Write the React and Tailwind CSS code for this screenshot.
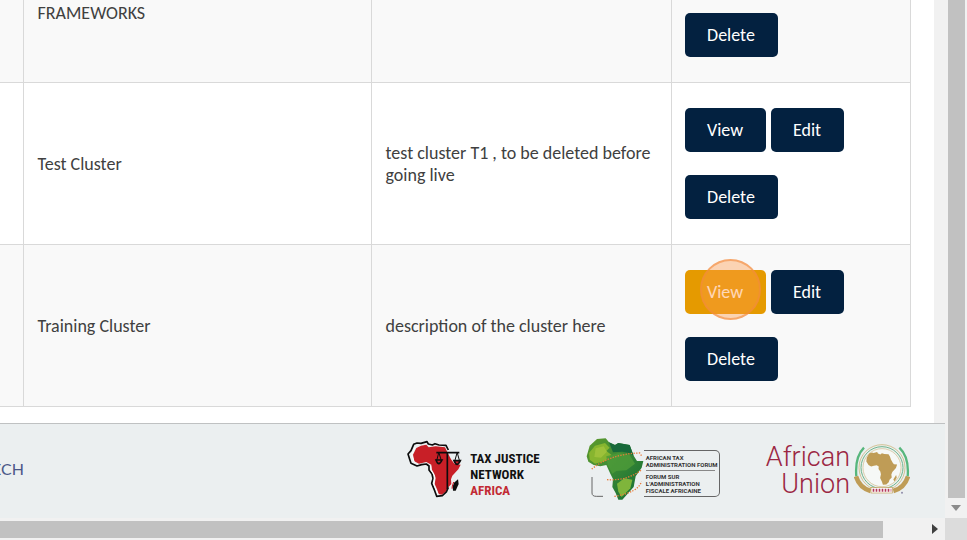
import React from "react";

const AFRICA =
  "M62 94 L74 73 L88 68 L96 70 L114 65 L118 72 L130 77 L138 71 L150 75 L171 76 L178 88 L183 103 L192 119 L198 126 L214 128 L208 145 L190 165 L185 178 L187 192 L176 204 L172 216 L160 228 L143 229 L138 214 L129 195 L133 176 L130 162 L121 150 L122 138 L112 131 L98 134 L84 138 L71 130 L60 112 Z";

function ActionButton({ children, className, marked }) {
  return (
    <button
      type="button"
      className={`relative h-11 rounded-[5px] text-center font-medium text-white ${className}`}
    >
      {children}
      {marked && (
        <span className="pointer-events-none absolute -top-[11px] left-[15px] size-[61px] rounded-full border-2 border-[#f28b3c]/60 bg-[#ff9a4a]/40" />
      )}
    </button>
  );
}

function Actions({ highlightView }) {
  return (
    <div className="flex flex-wrap gap-x-[5px] gap-y-[23px]">
      <ActionButton
        className={highlightView ? "w-[81px] bg-[#e59a00]" : "w-[81px] bg-[#032140]"}
        marked={highlightView}
      >
        View
      </ActionButton>
      <ActionButton className="w-[73px] bg-[#032140]">Edit</ActionButton>
      <ActionButton className="w-[93px] bg-[#032140]">Delete</ActionButton>
    </div>
  );
}

function TaxJusticeLogo() {
  return (
    <a href="#tjna" className="flex items-center gap-2">
      <svg viewBox="54 60 165 174" className="h-[58px] w-[55px]" aria-hidden="true">
        <path
          d="M72 104 L82 84 L96 77 L112 74 L119 82 L140 79 L168 82 L176 98 L186 118 L196 131 L215 134 L208 148 L190 167 L186 178 L187 192 L176 204 L170 216 L158 224 L149 222 L144 208 L137 192 L140 174 L135 160 L128 148 L127 134 L112 126 L90 131 L76 124 Z"
          fill="#c81f27"
        />
        <path
          d="M178 90 L171 76 L150 75 L138 71 L130 75 L118 72 L114 65 L96 70 L84 69 L74 73 L66 92 L57 102 L62 118 L66 130 L84 138 L98 134 L112 132 L120 138 L120 150 L129 162 L132 176 L128 190 L137 212 L143 229 L160 227 L172 216 L178 202"
          fill="none"
          stroke="#0c0c0c"
          strokeWidth="5"
          strokeLinejoin="round"
        />
        <path d="M76 128 L68 104 L78 82 M125 138 L127 152 L137 168 L134 192 L147 222" fill="none" stroke="#fff" strokeWidth="3" />
        <path d="M142 98 H211 M175 97 V207" fill="none" stroke="#0c0c0c" strokeWidth="5" />
        <path d="M149 99 L143 122 M150 99 L157 122 M204 99 L197 124 M205 99 L212 124" fill="none" stroke="#0c0c0c" strokeWidth="3" />
        <path d="M141 120 Q149 142 159 120 Z M195 122 Q204 144 214 122 Z" fill="#c81f27" stroke="#0c0c0c" strokeWidth="5" />
        <path d="M207 178 L209 192 L200 212 L192 212 L191 200 L195 188 Z" fill="#0c0c0c" />
        <path d="M194 186 L190 198 L189 206" fill="none" stroke="#c81f27" strokeWidth="3" />
      </svg>
      <span className="block pt-3 font-['Roboto_Condensed','Liberation_Sans_Narrow','Liberation_Sans',sans-serif] text-[13px] leading-4 font-bold whitespace-nowrap text-[#111]">
        TAX JUSTICE
        <br />
        NETWORK
        <br />
        <span className="text-[#c22a34]">AFRICA</span>
      </span>
    </a>
  );
}

function TaxForumLogo() {
  return (
    <a href="#ataf" className="flex items-center">
      <svg viewBox="51 50 174 192" className="h-16 w-[58px]" aria-hidden="true">
        <defs>
          <linearGradient id="forumLeaf" x1="0" y1="0" x2="1" y2="1">
            <stop offset="0" stopColor="#5f9a2c" />
            <stop offset=".4" stopColor="#3f8c35" />
            <stop offset="1" stopColor="#126b34" />
          </linearGradient>
        </defs>
        <path
          d="M53 108 L62 76 L84 56 L110 54 L120 66 L138 74 L148 68 L182 74 L194 106 L204 122 L223 122 L218 142 L200 168 L194 200 L178 218 L160 238 L148 238 L140 218 L130 200 L132 176 L124 160 L112 134 L94 138 L74 134 L58 124 Z"
          fill="url(#forumLeaf)"
        />
        <path d="M60 98 L78 76 L108 68 L122 82 L112 92 L128 104 L108 122 L78 130 L62 118 Z" fill="#91bb2f" opacity=".85" />
        <path d="M80 84 L104 78 L114 94 L96 112 L76 110 Z" fill="#b4cd45" opacity=".5" />
        <path d="M112 108 L150 98 L182 104 L198 130 L172 150 L142 152 L130 160 L116 134 Z" fill="#4c9a38" opacity=".85" />
        <path d="M144 190 L166 174 L190 178 L184 204 L158 230 L148 214 Z" fill="#7fb53b" />
        <path d="M120 66 L138 74 L148 68 L182 74 L194 106 L180 98 L160 94 L132 96 Z" fill="#17693a" />
        <path d="M68 146 Q126 100 212 98 L219 108 M114 178 Q176 182 218 148 M136 228 Q208 216 217 184" fill="none" stroke="#e97c3a" strokeWidth="4" strokeDasharray="4 4" />
        <path d="M69 170 V218 Q69 228 82 228 H102" fill="none" stroke="#666" strokeWidth="3" />
      </svg>
      <span className="mt-2 block w-[76px] rounded-r-[5px] border border-l-0 border-[#666] pt-[3px] pb-[2px] pl-[2px] font-['Roboto','Liberation_Sans',sans-serif] text-[6px] leading-[7px] font-bold whitespace-nowrap text-[#333]">
        <span className="mr-1 block border-b border-[#888] pb-[2px]">
          AFRICAN TAX
          <br />
          ADMINISTRATION FORUM
        </span>
        <span className="block pt-[2px]">
          FORUM SUR
          <br />
          L’ADMINISTRATION
          <br />
          FISCALE AFRICAINE
        </span>
      </span>
    </a>
  );
}

function AfricanUnionLogo() {
  return (
    <a href="#au" className="flex items-center gap-1">
      <span className="block pt-1 text-right font-['Roboto','Liberation_Sans',sans-serif] text-[27px] leading-[27px] font-light text-[#9b2743]">
        African
        <br />
        Union
      </span>
      <svg viewBox="312 68 168 156" className="h-[52px] w-14" aria-hidden="true">
        <g fill="none">
          <circle cx="396" cy="142" r="69" stroke="#c6ac67" strokeWidth="2" />
          <circle cx="396" cy="142" r="63" stroke="#71b58a" strokeWidth="3" />
          <circle cx="396" cy="142" r="57" stroke="#c6ac67" strokeWidth="1.5" fill="#f6f8f6" />
          <path d="M342 82 Q314 110 319 168" stroke="#57b67c" strokeWidth="7" />
          <path d="M448 82 Q478 110 473 168" stroke="#57b67c" strokeWidth="7" />
          <path d="M318 168 Q328 202 362 212" stroke="#bf9c56" strokeWidth="14" />
          <path d="M474 168 Q464 202 430 212" stroke="#bf9c56" strokeWidth="14" />
        </g>
        <g transform="translate(313 56) scale(.6)">
          <path d={AFRICA} fill="#bf9c56" />
          <path d="M209 180 L212 194 L201 212 L195 202 Z" fill="#bf9c56" />
        </g>
        <rect x="363" y="202" width="64" height="16" fill="#fff" stroke="#bf9c56" strokeWidth="2" />
        <path d="M368 210 H424" stroke="#b3395a" strokeWidth="9" strokeDasharray="5 4" />
        <circle cx="456" cy="217" r="3" fill="#8f8ca8" />
      </svg>
    </a>
  );
}

const cell = "border border-[#d9d9d9] px-[14px]";

export default function App() {
  return (
    <div className="grid h-screen grid-cols-[minmax(0,1fr)_22px] grid-rows-[minmax(0,1fr)_22px] overflow-hidden bg-[#f1f1f1] font-['Carlito','Lato','Liberation_Sans',sans-serif] text-lg leading-[22px] text-[#404040]">
      <main className="flex min-w-0 flex-col overflow-hidden">
        <div className="mr-[11px] grow bg-white pr-[23px]">
          <table className="w-full table-fixed border-collapse">
            <colgroup>
              <col className="w-[23px]" />
              <col className="w-[348px]" />
              <col className="w-[300px]" />
              <col />
            </colgroup>
            <tbody>
              <tr className="bg-[#f9f9f9]">
                <td className="border-r border-b border-[#d9d9d9]" />
                <td className="border-x border-b border-[#d9d9d9] px-[14px] pt-[2px] align-top">FRAMEWORKS</td>
                <td className="border-x border-b border-[#d9d9d9]" />
                <td className="border-x border-b border-[#d9d9d9] px-[13px] pt-[13px] pb-[25px]">
                  <div className="flex">
                    <ActionButton className="w-[93px] bg-[#032140]">Delete</ActionButton>
                  </div>
                </td>
              </tr>
              <tr>
                <td className="border-y border-[#d9d9d9]" />
                <td className={cell}>Test Cluster</td>
                <td className={cell}>test cluster T1 , to be deleted before going live</td>
                <td className="border border-[#d9d9d9] px-[13px] py-[25px]">
                  <Actions />
                </td>
              </tr>
              <tr className="bg-[#f9f9f9]">
                <td className="border-y border-[#d9d9d9]" />
                <td className={cell}>Training Cluster</td>
                <td className={cell}>description of the cluster here</td>
                <td className="border border-[#d9d9d9] px-[13px] py-[25px]">
                  <Actions highlightView />
                </td>
              </tr>
            </tbody>
          </table>
        </div>
        <footer className="flex h-[95px] shrink-0 items-center justify-between border-t border-[#bfc1c2] bg-[#ebeff0] pr-[35px] pb-1">
          <a href="#tech" className="-ml-2 font-['Lato','Liberation_Sans',sans-serif] text-base text-[#4a5788]">
            ECH
          </a>
          <div className="flex items-center gap-[46px]">
            <TaxJusticeLogo />
            <TaxForumLogo />
            <AfricanUnionLogo />
          </div>
        </footer>
      </main>
      <div className="flex flex-col items-center bg-[#f1f1f1]" aria-hidden="true">
        <div className="w-[17px] grow bg-[#c1c1c1]" />
        <div className="flex h-5 items-center">
          <svg viewBox="0 0 10 6" className="h-[6px] w-[10px]">
            <path d="M0 0 H10 L5 6 Z" fill="#8b8b8b" />
          </svg>
        </div>
      </div>
      <div className="flex items-center bg-[#f1f1f1]" aria-hidden="true">
        <div className="h-[17px] grow bg-[#c1c1c1]" />
        <div className="flex w-[62px] justify-end pr-[7px]">
          <svg viewBox="0 0 6 10" className="h-[10px] w-[6px]">
            <path d="M0 0 V10 L6 5 Z" fill="#404040" />
          </svg>
        </div>
      </div>
      <div className="bg-[#dcdcdc]" />
    </div>
  );
}
